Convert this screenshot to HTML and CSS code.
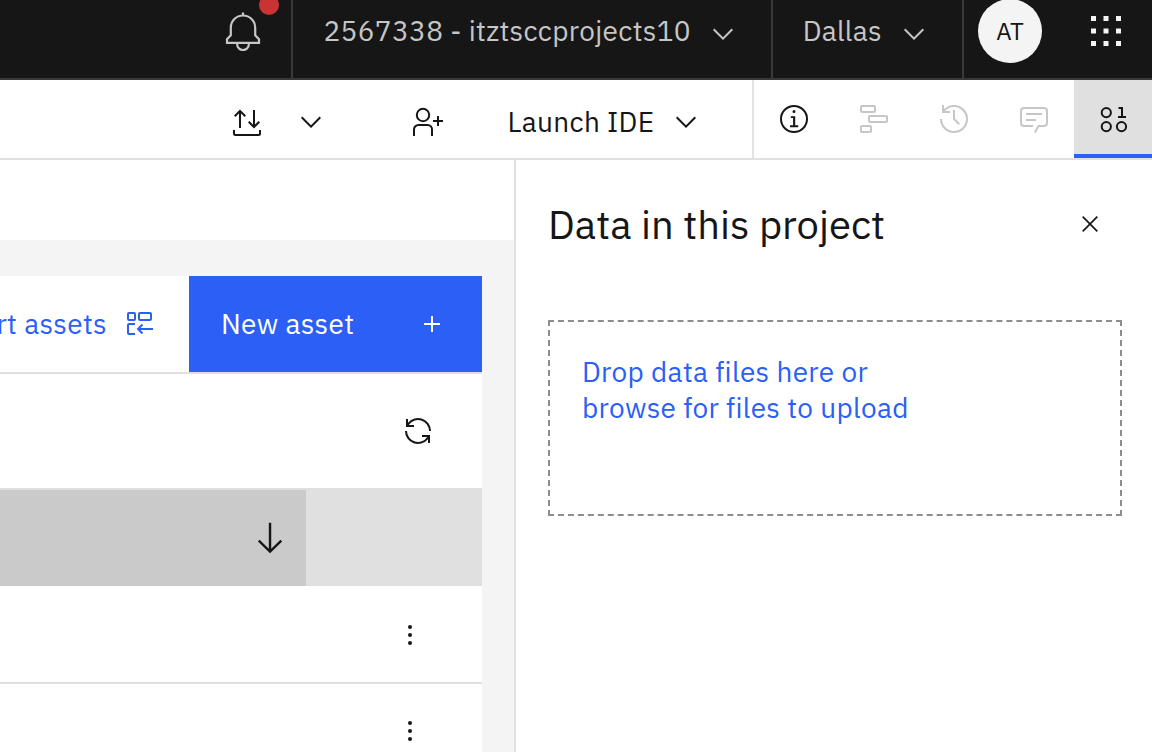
FILE: index.html
```html
<!DOCTYPE html>
<html lang="en">
<head>
<meta charset="utf-8">
<title>Data in this project</title>
<link rel="stylesheet" href="styles.css">
</head>
<body>
<svg class="defs" width="0" height="0">
  <symbol id="chevron" viewBox="0 0 32 32"><path d="M16 22 6 12l1.4-1.4 8.6 8.6 8.6-8.6L26 12z"/></symbol>
  <symbol id="kebab" viewBox="0 0 32 32"><circle cx="16" cy="8" r="2"/><circle cx="16" cy="16" r="2"/><circle cx="16" cy="24" r="2"/></symbol>
</svg>
<div class="app">
  <header class="topbar">
    <button class="notify">
      <svg class="icon-lg line" viewBox="0 0 40 40"><path d="M20 1.500V5M4 31.900v-3.600l3.800-4V16.500a12.200 12 0 0 1 24.400 0v7.800l3.800 4v3.600zM14.200 32.500v1a5.800 5.500 0 0 0 11.600 0v-1"/></svg>
      <span class="badge"></span>
    </button>
    <button class="account"><span>2567338 - itztsccprojects10</span><svg class="icon"><use href="#chevron"/></svg></button>
    <button class="region"><span>Dallas</span><svg class="icon"><use href="#chevron"/></svg></button>
    <div class="profile">
      <span class="avatar">AT</span>
      <svg class="icon-lg" viewBox="0 0 32 32"><path d="M4 4h4v4H4zM14 4h4v4h-4zM24 4h4v4h-4zM4 14h4v4H4zM14 14h4v4h-4zM24 14h4v4h-4zM4 24h4v4H4zM14 24h4v4h-4zM24 24h4v4h-4z"/></svg>
    </div>
  </header>

  <nav class="toolbar">
    <div class="actions">
      <svg class="icon line" viewBox="0 0 32 32"><path d="M9 22V5M3.700 10.300 9 5l5.300 5.300M23 4v17M17.700 15.700 23 21l5.300-5.300M3 24v3.500a1.500 1.500 0 0 0 1.500 1.500h23a1.500 1.500 0 0 0 1.500-1.500V24"/></svg>
      <svg class="icon chev-import"><use href="#chevron"/></svg>
      <svg class="icon line follow" viewBox="0 0 32 32"><circle cx="11" cy="9" r="6.200"/><path d="M2 30v-6.500a4.500 4.500 0 0 1 4.500-4.500h9a4.500 4.500 0 0 1 4.500 4.500V30M26 10v10M21 15h10"/></svg>
      <span>Launch IDE</span>
      <svg class="icon"><use href="#chevron"/></svg>
    </div>
    <div class="tabs">
      <div class="tab"><svg class="icon" viewBox="0 0 32 32"><circle class="stroke" cx="16" cy="16" r="13"/><path d="M17.200 22.300v-9.100h-4.400v1.900h2.300v7.200h-3.100v2h8.200v-2zM16 7a1.500 1.500 0 1 0 0 3 1.500 1.500 0 0 0 0-3z"/></svg></div>
      <div class="tab off"><svg class="icon line" viewBox="0 0 32 32"><rect x="3" y="3" width="14" height="6" rx="1"/><rect x="11" y="13" width="18" height="6" rx="1"/><rect x="3" y="23" width="10" height="6" rx="1"/></svg></div>
      <div class="tab off"><svg class="icon" viewBox="0 0 32 32"><path d="M20.590 22 15 16.410V7h2v8.580L22 20.590zM16 2A13.940 13.940 0 0 0 6 6.230V2H4v8h8V8H7.080A12 12 0 1 1 4 16H2A14 14 0 1 0 16 2z"/></svg></div>
      <div class="tab off"><svg class="icon" viewBox="0 0 32 32"><path d="M17.740 30 16 29l4-7h6a2 2 0 0 0 2-2V8a2 2 0 0 0-2-2H6a2 2 0 0 0-2 2v12a2 2 0 0 0 2 2h9v2H6a4 4 0 0 1-4-4V8a4 4 0 0 1 4-4h20a4 4 0 0 1 4 4v12a4 4 0 0 1-4 4h-4.840zM8 10h16v2H8zM8 16h10v2H8z"/></svg></div>
      <div class="tab on"><svg class="icon line" viewBox="0 0 32 32"><circle cx="8.300" cy="9.600" r="4.600"/><circle cx="8.300" cy="23.600" r="4.600"/><circle cx="23.500" cy="23.600" r="4.600"/><path d="M20.500 5H24v9M20 14h8"/></svg></div>
    </div>
  </nav>

  <div class="body">
    <main class="main">
      <div class="strip"></div>
      <section class="assets">
        <div class="asset-bar">
          <div class="import"><span>Import assets</span>
            <svg class="icon line" viewBox="0 0 32 32"><rect x="4" y="5" width="7" height="7" rx="1"/><rect x="15" y="5" width="12" height="7" rx="1"/><path d="M11 16H5a1 1 0 0 0-1 1v8a1 1 0 0 0 1 1h6M29 21H14M18.500 16.500 14 21l4.500 4.500"/></svg>
          </div>
          <button class="new"><span>New asset</span><svg class="icon" viewBox="0 0 32 32"><path d="M17 15V8h-2v7H8v2h7v7h2v-7h7v-2z"/></svg></button>
        </div>
        <div class="refresh">
          <svg class="icon" viewBox="0 0 32 32"><path d="M12 10H6.780A11 11 0 0 1 27 16h2A13 13 0 0 0 6 7.680V4H4v8h8zM20 22h5.220A11 11 0 0 1 5 16H3a13 13 0 0 0 23 8.320V28h2v-8h-8z"/></svg>
        </div>
        <div class="thead"><div class="sorted">
          <svg class="icon-lg" viewBox="0 0 32 32"><path d="M24.600 18.600 17 26.200V4h-2v22.200l-7.600-7.600L6 20l10 10 10-10z" transform="translate(0.500 0) scale(.97 .94)"/></svg>
        </div></div>
        <div class="row"><svg class="icon"><use href="#kebab"/></svg></div>
        <div class="row"><svg class="icon"><use href="#kebab"/></svg></div>
      </section>
    </main>
    <aside class="panel">
      <div class="panel-head">
        <h2>Data in this project</h2>
        <svg class="icon close" viewBox="0 0 32 32"><path d="m8.700 8.700 14.600 14.600M23.300 8.700 8.700 23.300"/></svg>
      </div>
      <div class="drop"><div>Drop data files here or</div><div>browse for files to upload</div></div>
    </aside>
  </div>
</div>
</body>
</html>
```

FILE: styles.css
```css
* { box-sizing: border-box; }
body {
  margin: 0;
  font: 28px/36px "IBM Plex Sans", Roboto, "Liberation Sans", sans-serif;
  letter-spacing: .32px;
  color: #161616;
  background: #fff;
}
button { margin: 0; border: 0; padding: 0; background: none; font: inherit; letter-spacing: inherit; color: inherit; text-align: left; }
svg { display: block; flex: none; fill: currentColor; }
span, h2, .drop div { white-space: nowrap; }
.defs { position: absolute; }
.icon { width: 32px; height: 32px; }
.icon-lg { width: 40px; height: 40px; }
.line, .stroke { fill: none; stroke: currentColor; stroke-width: 2; }
.close { fill: none; stroke: currentColor; stroke-width: 1.7; }

.app { width: 1152px; height: 752px; display: flex; flex-direction: column; overflow: hidden; }

.topbar { height: 80px; flex: none; display: flex; background: #161616; border-bottom: 2px solid #393939; color: #c6c6c6; }
.notify { position: relative; display: flex; align-items: flex-start; width: 291px; padding: 11px 0 0 223px; }
.notify svg { stroke-width: 2.2; }
.badge { position: absolute; left: 259px; top: -5px; width: 20px; height: 20px; border-radius: 50%; background: #c93433; }
.account, .region { display: flex; justify-content: space-between; border-left: 2px solid #393939; padding-top: 13px; }
.account { width: 480px; padding-left: 30.500px; padding-right: 32px; }
.region { width: 191px; padding-left: 29.700px; padding-right: 32px; }
.account svg, .region svg { margin-top: 5px; }
.profile { flex: 1; display: flex; border-left: 2px solid #393939; padding-left: 14px; gap: 44px; color: #f4f4f4; }
.profile svg { margin-top: 11px; }
.avatar { width: 64px; height: 64px; margin-top: -1px; border-radius: 50%; background: #f4f4f4; color: #161616; font-size: 24px; letter-spacing: 0; line-height: 65px; text-align: center; }

.toolbar { height: 80px; flex: none; display: flex; border-bottom: 2px solid #e0e0e0; }
.actions { width: 752px; display: flex; padding: 26px 50px 0 231px; }
.chev-import { margin-left: 32px; }
.follow { margin: 0 63.500px 0 85px; }
.actions span { flex: 1; line-height: 32px; }
.tabs { flex: 1; display: flex; border-left: 2px solid #e4e4e4; }
.tab { width: 80px; padding: 23px 0 0 24px; }
.off { color: #c6c6c6; }
.on { width: 78px; background: #e0e0e0; border-bottom: 4px solid #2b5ff5; }

.body { flex: 1; display: flex; min-height: 0; }
.main { width: 514px; background: #f4f4f4; overflow: hidden; }
.strip { height: 80px; background: #fff; margin-bottom: 36px; }
.assets { width: 482px; background: #fff; }
.asset-bar { height: 98px; display: flex; border-bottom: 2px solid #e0e0e0; }
.import { width: 189px; display: flex; justify-content: flex-end; align-items: center; gap: 17px; padding-right: 33px; color: #2b5ff5; }
.import svg { margin-top: -1px; }
.new { width: 293px; display: flex; justify-content: space-between; align-items: center; padding: 0 34px 0 32px; background: #2b5ff5; color: #fff; }
.refresh { height: 116px; display: flex; justify-content: flex-end; padding: 41px 48px 0 0; border-bottom: 2px solid #e0e0e0; }
.thead { height: 96px; background: #e0e0e0; }
.sorted { width: 306px; height: 96px; padding: 28px 0 0 250px; background: #cacaca; }
.row { height: 98px; display: flex; justify-content: flex-end; padding: 33px 56px 0 0; border-bottom: 2px solid #e0e0e0; }
.row + .row { padding-top: 31px; }

.panel { flex: 1; border-left: 2px solid #e0e0e0; padding: 40px 30px 0 32px; }
.panel-head { display: flex; justify-content: space-between; padding-right: 16px; height: 120px; }
.panel-head svg { margin-top: 8px; }
h2 { margin: 0; font-weight: 400; font-size: 40px; line-height: 48px; letter-spacing: 0; }
.drop { height: 196px; border: 2px dashed #8d8d8d; padding: 32px; color: #2b5ff5; }
```
